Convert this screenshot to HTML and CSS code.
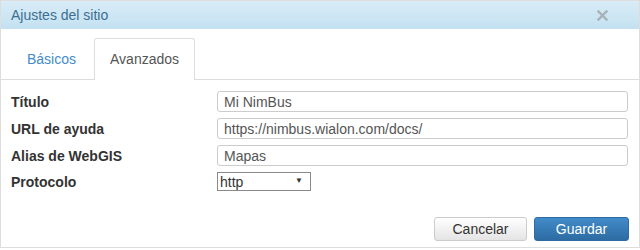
FILE: index.html
```html
<!DOCTYPE html>
<html lang="es">
<head>
    <meta charset="UTF-8">
    <title>Ajustes del sitio</title>
    <link rel="stylesheet" href="styles.css">
</head>
<body>
    <div class="dialog">
        <div class="dialog-header">
            <span class="dialog-title">Ajustes del sitio</span>
            <svg class="close-btn" width="11" height="11" viewBox="0 0 11 11">
                <path d="M1.5 1.5 L9.5 9.5 M9.5 1.5 L1.5 9.5" stroke="#a7b1b8" stroke-width="2.4" stroke-linecap="square"/>
            </svg>
        </div>

        <div class="tabs">
            <div class="tab">Básicos</div>
            <div class="tab active">Avanzados</div>
        </div>

        <div class="form">
            <div class="row">
                <label class="label">Título</label>
                <input type="text" class="text-input" value="Mi NimBus">
            </div>
            <div class="row">
                <label class="label">URL de ayuda</label>
                <input type="text" class="text-input" value="https://nimbus.wialon.com/docs/">
            </div>
            <div class="row">
                <label class="label">Alias de WebGIS</label>
                <input type="text" class="text-input" value="Mapas">
            </div>
            <div class="row">
                <label class="label">Protocolo</label>
                <span class="select-wrap">
                    <select class="select">
                        <option>http</option>
                        <option>https</option>
                    </select>
                </span>
            </div>
        </div>

        <div class="footer">
            <button class="btn btn-default">Cancelar</button>
            <button class="btn btn-primary">Guardar</button>
        </div>
    </div>
</body>
</html>
```

FILE: styles.css
```css
* {
    margin: 0;
    padding: 0;
    box-sizing: border-box;
}
body {
    background: #fff;
    font-family: "Liberation Sans", Arial, sans-serif;
    font-size: 14px;
    color: #333;
}
.dialog {
    width: 640px;
    height: 248px;
    border: 1px solid #ddd;
    background: #fff;
    display: flex;
    flex-direction: column;
}
.dialog-header {
    height: 28px;
    background: linear-gradient(#d9ecf7, #c3e1f1);
    display: flex;
    align-items: center;
    justify-content: space-between;
    padding: 0 31px 0 10px;
}
.dialog-title {
    color: #3c6e90;
    font-size: 14px;
}
.close-btn {
    display: block;
    margin-top: 1px;
}
.tabs {
    display: flex;
    padding: 9px 0 0 10px;
    border-bottom: 1px solid #ddd;
}
.tab {
    padding: 10px 15px;
    line-height: 20px;
    border: 1px solid transparent;
    border-bottom: none;
    border-radius: 3px 3px 0 0;
    margin-right: 2px;
    margin-bottom: -1px;
    color: #428bca;
}
.tab.active {
    color: #555;
    background: #fff;
    border-color: #ddd;
    padding-bottom: 11px;
}
.form {
    padding: 11px 11px 0 10px;
    display: flex;
    flex-direction: column;
    gap: 6px;
}
.row {
    display: flex;
    align-items: center;
}
.label {
    width: 206px;
    font-weight: bold;
    font-size: 14px;
    color: #333;
}
.text-input {
    flex: 1;
    height: 21px;
    padding: 0 6px;
    border: 1px solid #ccc;
    border-radius: 3px;
    font-family: inherit;
    font-size: 14px;
    color: #555;
    outline: none;
}
.select-wrap {
    position: relative;
    display: inline-block;
}
.select-wrap::after {
    content: "\25BC";
    position: absolute;
    right: 8px;
    top: 4px;
    font-size: 8px;
    color: #333;
    pointer-events: none;
}
.select {
    appearance: none;
    -webkit-appearance: none;
    width: 94px;
    height: 19px;
    border: 1px solid #8a8a8a;
    border-radius: 0;
    background: #fff;
    padding: 0 2px;
    font-family: inherit;
    font-size: 14px;
    color: #333;
    outline: none;
}
.footer {
    margin-top: auto;
    display: flex;
    justify-content: flex-end;
    gap: 7px;
    padding: 0 10px 6px 0;
}
.btn {
    height: 24px;
    border-radius: 3px;
    font-family: inherit;
    font-size: 14px;
    cursor: pointer;
}
.btn-default {
    width: 93px;
    color: #333;
    border: 1px solid #ccc;
    background: linear-gradient(#fff, #e4e4e4);
}
.btn-primary {
    width: 95px;
    color: #fff;
    border: 1px solid #2d6ca2;
    background: linear-gradient(#428bca, #2d6ca2);
}
```
